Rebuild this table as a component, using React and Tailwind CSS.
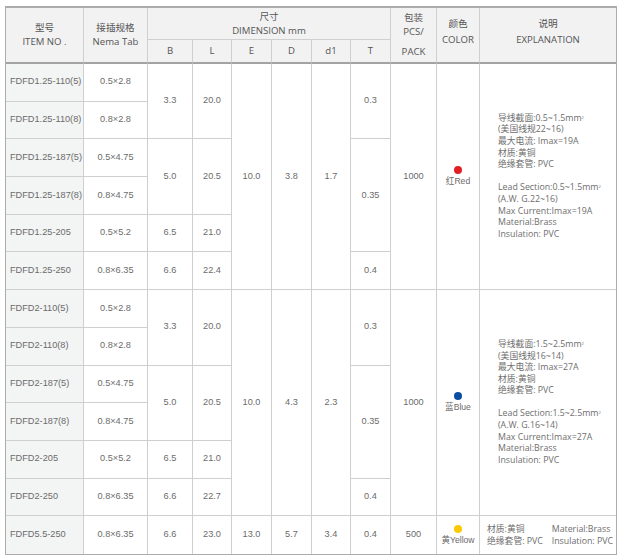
import React from 'react'

const body = "text-[#6b6b6b] text-[9.2px] font-['Liberation_Sans','Noto_Sans_CJK_SC',sans-serif]"
const cell = "border-r border-b border-[#cfcfcf] text-center align-middle"
const first = "border-r border-b border-[#cfcfcf] bg-[#f3f4f4] text-left pl-[4px] align-middle"
const head = "border-r border-[#cfcfcf] text-center align-middle text-[#555] text-[9.6px] font-['Open_Sans','Noto_Sans_CJK_SC',sans-serif] leading-[14px] font-normal"

function Dot({ color, label }) {
  return (
    <div className="flex flex-col items-center">
      <span className={`w-[8px] h-[8px] rounded-full ${color}`} />
      <span className="leading-[12px] mt-[1px] text-[8.6px] font-['Liberation_Sans','Noto_Sans_CJK_SC',sans-serif]">{label}</span>
    </div>
  )
}

function Explain({ sec, awg, amp }) {
  return (
    <div className="text-left pl-[18px] text-[8.8px] leading-[11.6px] text-[#6e6e6e] font-['Open_Sans','Noto_Sans_CJK_SC',sans-serif]">
      <div>导线截面:{sec}mm<sup className="text-[4px]">2</sup></div>
      <div>(美国线规{awg})</div>
      <div>最大电流: Imax={amp}</div>
      <div>材质:黄铜</div>
      <div>绝缘套管: PVC</div>
      <div className="h-[11.6px]" />
      <div>Lead Section:{sec}mm<sup className="text-[4px]">2</sup></div>
      <div>(A.W. G.{awg})</div>
      <div>Max Current:Imax={amp}</div>
      <div>Material:Brass</div>
      <div>Insulation: PVC</div>
    </div>
  )
}

function Group({ prefix, ls, d, d1, dot, sec, awg, amp }) {
  const r = "h-[37.7px]"
  return (
    <>
      <tr className={r}>
        <td className={first}>{prefix}-110(5)</td>
        <td className={cell}>0.5×2.8</td>
        <td className={cell} rowSpan={2}>3.3</td>
        <td className={cell} rowSpan={2}>{ls[0]}</td>
        <td className={cell} rowSpan={6}>10.0</td>
        <td className={cell} rowSpan={6}>{d}</td>
        <td className={cell} rowSpan={6}>{d1}</td>
        <td className={cell} rowSpan={2}>0.3</td>
        <td className={cell} rowSpan={6}>1000</td>
        <td className={cell} rowSpan={6}>{dot}</td>
        <td className="border-b border-[#cfcfcf] align-middle" rowSpan={6}>
          <Explain sec={sec} awg={awg} amp={amp} />
        </td>
      </tr>
      <tr className={r}>
        <td className={first}>{prefix}-110(8)</td>
        <td className={cell}>0.8×2.8</td>
      </tr>
      <tr className={r}>
        <td className={first}>{prefix}-187(5)</td>
        <td className={cell}>0.5×4.75</td>
        <td className={cell} rowSpan={2}>5.0</td>
        <td className={cell} rowSpan={2}>{ls[1]}</td>
        <td className={cell} rowSpan={3}>0.35</td>
      </tr>
      <tr className={r}>
        <td className={first}>{prefix}-187(8)</td>
        <td className={cell}>0.8×4.75</td>
      </tr>
      <tr className={r}>
        <td className={first}>{prefix}-205</td>
        <td className={cell}>0.5×5.2</td>
        <td className={cell}>6.5</td>
        <td className={cell}>{ls[2]}</td>
      </tr>
      <tr className={r}>
        <td className={first}>{prefix}-250</td>
        <td className={cell}>0.8×6.35</td>
        <td className={cell}>6.6</td>
        <td className={cell}>{ls[3]}</td>
        <td className={cell}>0.4</td>
      </tr>
    </>
  )
}

export default function App() {
  const sub = "border-r border-b-2 border-[#cfcfcf] border-b-[#a3a3a3] text-center align-middle text-[#555] text-[9.6px] font-['Open_Sans',sans-serif] font-normal"
  const last = "border-r border-[#cfcfcf] text-center align-middle"
  return (
    <div className="w-[624px] h-[559px] bg-white pt-[6px] pl-[5px]">
      <div className="w-[612px] border border-t-2 border-[#acacac]">
        <table className={`w-full table-fixed border-separate border-spacing-0 ${body}`}>
          <colgroup>
            <col className="w-[78px]" />
            <col className="w-[64px]" />
            <col className="w-[45px]" />
            <col className="w-[39px]" />
            <col className="w-[40px]" />
            <col className="w-[40px]" />
            <col className="w-[39px]" />
            <col className="w-[40px]" />
            <col className="w-[46px]" />
            <col className="w-[43px]" />
            <col />
          </colgroup>
          <thead className="bg-[#f2f2f2]">
            <tr className="h-[32px]">
              <th className={`${head} border-b-2 border-b-[#a3a3a3]`} rowSpan={2}>
                <div>型号</div>
                <div>ITEM NO .</div>
              </th>
              <th className={`${head} border-b-2 border-b-[#a3a3a3]`} rowSpan={2}>
                <div>接插规格</div>
                <div>Nema Tab</div>
              </th>
              <th className={`${head} border-b leading-[11px]`} colSpan={6}>
                <div>尺寸</div>
                <div>DIMENSION mm</div>
              </th>
              <th className={`${head} border-b-2 border-b-[#a3a3a3] leading-[11px]`} rowSpan={2}>
                <div>包装</div>
                <div>PCS/</div>
                <div className="mt-[6px]">PACK</div>
              </th>
              <th className={`${head} border-b-2 border-b-[#a3a3a3] leading-[16px] pb-[6px]`} rowSpan={2}>
                <div>颜色</div>
                <div>COLOR</div>
              </th>
              <th className={`${head} border-r-0 border-b-2 border-b-[#a3a3a3] leading-[16px] pb-[6px]`} rowSpan={2}>
                <div>说明</div>
                <div>EXPLANATION</div>
              </th>
            </tr>
            <tr className="h-[24px]">
              {['B', 'L', 'E', 'D', 'd1', 'T'].map((t) => (
                <th key={t} className={sub}>{t}</th>
              ))}
            </tr>
          </thead>
          <tbody>
            <Group
              prefix="FDFD1.25"
              ls={['20.0', '20.5', '21.0', '22.4']}
              d="3.8"
              d1="1.7"
              dot={<Dot color="bg-[#e31e24]" label="红Red" />}
              sec="0.5~1.5"
              awg="22~16"
              amp="19A"
            />
            <Group
              prefix="FDFD2"
              ls={['20.0', '20.5', '21.0', '22.7']}
              d="4.3"
              d1="2.3"
              dot={<Dot color="bg-[#0a4ea2]" label="蓝Blue" />}
              sec="1.5~2.5"
              awg="16~14"
              amp="27A"
            />
            <tr className="h-[37.7px]">
              <td className="border-r border-[#cfcfcf] bg-[#f3f4f4] text-left pl-[4px] align-middle">FDFD5.5-250</td>
              <td className={last}>0.8×6.35</td>
              <td className={last}>6.6</td>
              <td className={last}>23.0</td>
              <td className={last}>13.0</td>
              <td className={last}>5.7</td>
              <td className={last}>3.4</td>
              <td className={last}>0.4</td>
              <td className={last}>500</td>
              <td className={last}>
                <Dot color="bg-[#fbc900]" label="黄Yellow" />
              </td>
              <td className="align-middle">
                <div className="flex justify-between pl-[7px] pr-[3px] text-[8.8px] leading-[12px] text-[#6e6e6e] font-['Open_Sans','Noto_Sans_CJK_SC',sans-serif]">
                  <div>
                    <div>材质:黄铜</div>
                    <div>绝缘套管: PVC</div>
                  </div>
                  <div>
                    <div>Material:Brass</div>
                    <div>Insulation: PVC</div>
                  </div>
                </div>
              </td>
            </tr>
          </tbody>
        </table>
      </div>
    </div>
  )
}
